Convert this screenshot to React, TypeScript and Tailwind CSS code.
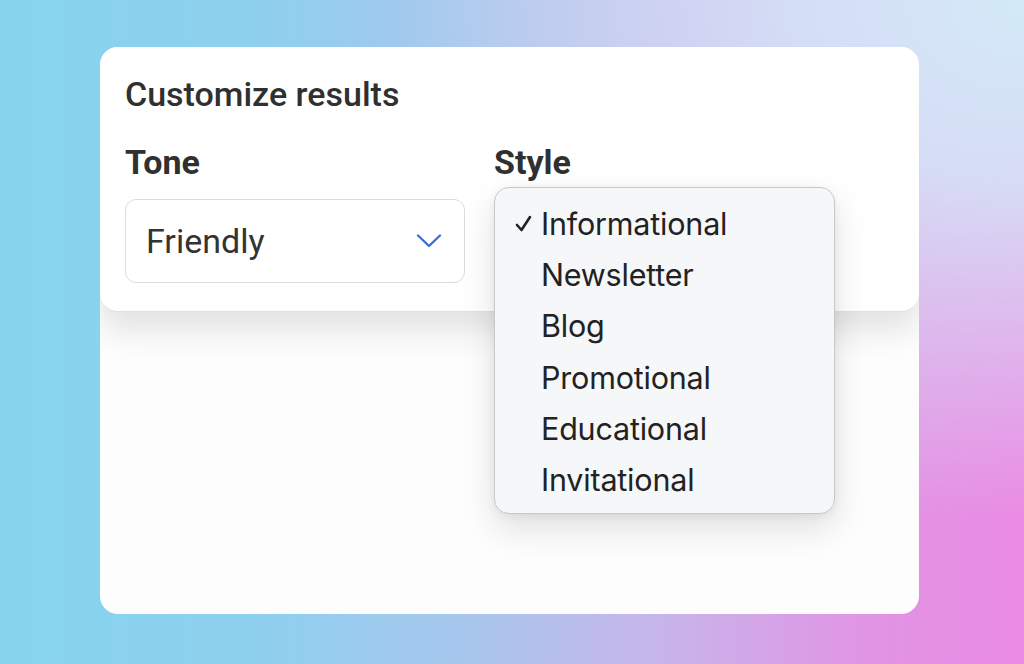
import React from "react";

const items = ["Informational", "Newsletter", "Blog", "Promotional", "Educational", "Invitational"];

export default function App() {
  return (
    <div
      className="w-[1024px] h-[664px] overflow-hidden pt-[47px] pl-[100px] bg-[radial-gradient(ellipse_640px_520px_at_100%_0%,#d3eaf8_0%,rgba(211,234,248,0.85)_35%,rgba(211,234,248,0)_100%),linear-gradient(90deg,#87d4ee_0%,#8ed0ee_25%,#a6c6ec_45%,#c8b4ea_65%,#e194e4_85%,#ea8ae3_100%)]"
      style={{ fontFamily: "Roboto, 'Noto Sans', sans-serif" }}
    >
      <div className="relative w-[819px] h-[567px] rounded-[18px] bg-[#fdfdfd] overflow-hidden">
        <div className="relative z-10 h-[265px] bg-white rounded-b-[18px] border-b border-[#e0e0e0] shadow-[0_18px_32px_rgba(0,0,0,0.11)] px-[25px] pt-[27px]">
          <div className="text-[34px] leading-[40px] font-medium text-[#303030]">Customize results</div>
          <div className="flex mt-[28px]">
            <div className="w-[340px]">
              <div className="text-[34px] leading-[40px] font-bold text-[#303030]">Tone</div>
              <div className="mt-[17px] h-[84px] rounded-[11px] border border-[#dcdcdc] flex items-center justify-between pl-[20px] pr-[22px]">
                <span className="text-[34px] text-[#333333]">Friendly</span>
                <svg width="26" height="16" viewBox="0 0 26 16" fill="none">
                  <path d="M2 2.5 L13 13 L24 2.5" stroke="#3b6de0" strokeWidth="2.4" strokeLinecap="round" strokeLinejoin="round" />
                </svg>
              </div>
            </div>
            <div className="ml-[29px] w-[340px]">
              <div className="text-[34px] leading-[40px] font-bold text-[#303030]">Style</div>
              <div className="mt-[17px] h-[84px] rounded-[11px] border-2 border-[#6f98ec]" />
            </div>
          </div>
        </div>
        <div
          className="absolute z-20 left-[394px] top-[140px] w-[341px] h-[327px] rounded-[15px] bg-[#f6f7f9] border border-[#c8c8cb] shadow-[0_14px_34px_rgba(0,0,0,0.12),0_2px_8px_rgba(0,0,0,0.06)] pt-[10px]"
          style={{ fontFamily: "Inter, 'Noto Sans', sans-serif" }}
        >
          {items.map((it, i) => (
            <div key={it} className="relative h-[51.3px] flex items-center pl-[46px] text-[30.5px] text-[#222222] tracking-[-0.2px]">
              {i === 0 && (
                <svg className="absolute left-[20px] top-[17px]" width="17" height="17" viewBox="0 0 17 17" fill="none">
                  <path d="M2 10 L6.5 15 L15 2" stroke="#222222" strokeWidth="2.6" strokeLinecap="round" strokeLinejoin="round" />
                </svg>
              )}
              {it}
            </div>
          ))}
        </div>
      </div>
    </div>
  );
}
